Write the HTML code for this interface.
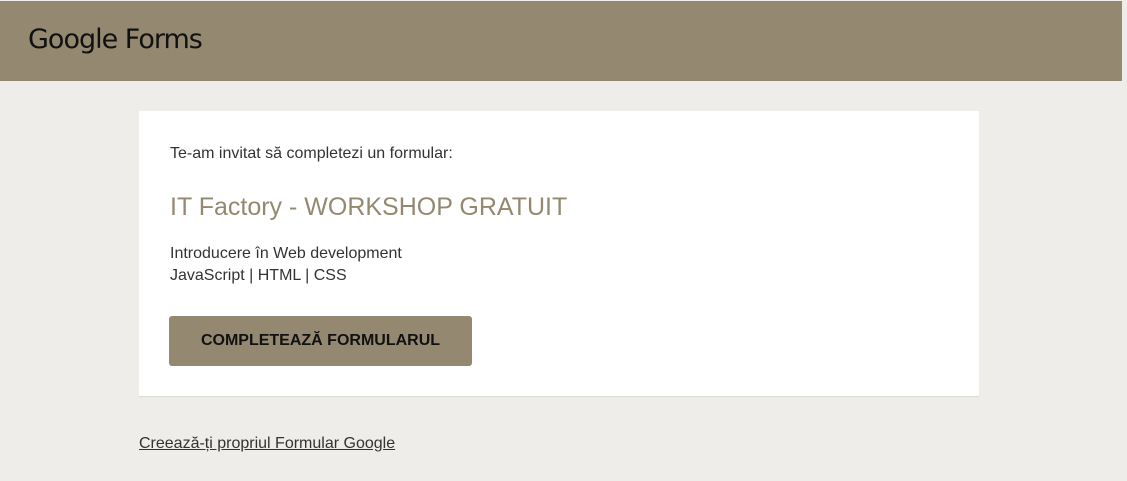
<!DOCTYPE html>
<html><head><meta charset="utf-8"><style>
body{margin:0;width:1127px;height:481px;background:#eeedea;font-family:"Liberation Sans",Arial,sans-serif;overflow:hidden;position:relative}
.hdr{position:absolute;left:0;top:1px;width:1122px;height:80px;background:#948970}
.logo{position:absolute;left:28px;top:23px;font-size:27px;color:#111;letter-spacing:-1px;font-family:"DejaVu Sans","Liberation Sans",sans-serif}
.card{position:absolute;left:139px;top:111px;width:840px;height:285px;background:#fff;border-bottom:1px solid #dcdad5}
.t1{position:absolute;left:31px;top:34px;font-size:16px;color:#333}
.t2{position:absolute;left:31px;top:82px;font-size:25px;color:#948970}
.t3{position:absolute;left:31px;top:132px;font-size:16px;color:#333;line-height:22px}
.btn{position:absolute;left:30px;top:205px;width:303px;height:50px;background:#948970;border-radius:3px;font-weight:bold;font-size:16px;color:#111;text-align:center;line-height:50px}
.lnk{position:absolute;left:139px;top:435px;font-size:16px;color:#333;text-decoration:underline}
</style></head><body>
<div class="hdr"><div class="logo">Google Forms</div></div>
<div class="card">
<div class="t1">Te-am invitat să completezi un formular:</div>
<div class="t2">IT Factory - WORKSHOP GRATUIT</div>
<div class="t3">Introducere în Web development<br>JavaScript | HTML | CSS</div>
<div class="btn">COMPLETEAZĂ FORMULARUL</div>
</div>
<div class="lnk">Creează-ți propriul Formular Google</div>
</body></html>
